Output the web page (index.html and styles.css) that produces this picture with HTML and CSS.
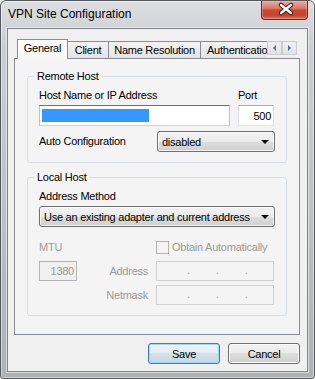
FILE: index.html
```html
<!DOCTYPE html>
<html lang="en">
<head>
    <meta charset="UTF-8">
    <title>VPN Site Configuration</title>
    <link rel="stylesheet" href="styles.css">
</head>
<body>
    <div class="window">
        <div class="titlebar">
            <span class="title">VPN Site Configuration</span>
            <button class="close" aria-label="Close">
                <svg width="47" height="19" viewBox="0 0 47 19">
                    <path d="M20 5 L30 13 M30 5 L20 13" stroke="#4a1c14" stroke-width="4.5" stroke-linecap="round"/>
                    <path d="M20 5 L30 13 M30 5 L20 13" stroke="#ffffff" stroke-width="2.4" stroke-linecap="round"/>
                </svg>
            </button>
        </div>
        <div class="client">
            <div class="tabstrip">
                <div class="tabs">
                    <div class="tab active">General</div>
                    <div class="tab t-client">Client</div>
                    <div class="tab t-names">Name Resolution</div>
                    <div class="tab t-auth">Authentication</div>
                </div>
                <div class="tab-scroll">
                    <span class="scroll-btn">
                        <svg width="13" height="12" viewBox="0 0 13 12"><path d="M8 3 L5 6 L8 9 Z" fill="#4f6b98"/></svg>
                    </span>
                    <span class="scroll-btn">
                        <svg width="13" height="12" viewBox="0 0 13 12"><path d="M5 3 L8 6 L5 9 Z" fill="#4f6b98"/></svg>
                    </span>
                </div>
            </div>

            <div class="panel">
                <fieldset class="group">
                    <legend>Remote Host</legend>
                    <div class="remote-grid">
                        <span class="label">Host Name or IP Address</span>
                        <span class="label">Port</span>
                        <div class="textbox focused"><span class="selection"></span></div>
                        <div class="textbox number">500</div>
                    </div>
                    <div class="auto-row">
                        <span class="label">Auto Configuration</span>
                        <div class="combo short">
                            <span>disabled</span>
                            <span class="arrow"></span>
                        </div>
                    </div>
                </fieldset>

                <fieldset class="group local">
                    <legend>Local Host</legend>
                    <span class="label">Address Method</span>
                    <div class="combo wide">
                        <span>Use an existing adapter and current address</span>
                        <span class="arrow"></span>
                    </div>
                    <div class="local-grid">
                        <span class="label disabled">MTU</span>
                        <span></span>
                        <label class="check disabled"><span class="box"></span>Obtain Automatically</label>

                        <div class="textbox number disabled">1380</div>
                        <span class="label disabled right">Address</span>
                        <div class="textbox ip disabled"><span>.</span><span>.</span><span>.</span></div>

                        <span></span>
                        <span class="label disabled right">Netmask</span>
                        <div class="textbox ip disabled"><span>.</span><span>.</span><span>.</span></div>
                    </div>
                </fieldset>
            </div>

            <div class="footer">
                <button class="btn default">Save</button>
                <button class="btn">Cancel</button>
            </div>
        </div>
    </div>
</body>
</html>
```

FILE: styles.css
```css
body {
    margin: 0;
    background: #ffffff;
    font-family: "Liberation Sans", Arial, sans-serif;
    font-size: 11px;
    letter-spacing: -0.25px;
    color: #000000;
}
.window {
    width: 315px;
    height: 379px;
    box-sizing: border-box;
    display: flex;
    flex-direction: column;
    border: 1px solid #55595e;
    border-radius: 6px 6px 3px 3px;
    background: linear-gradient(to bottom, #dcdee1 0%, #cbced2 12%, #bcc0c4 60%, #aeb2b7 100%);
    box-shadow: inset 0 0 0 1px rgba(255,255,255,0.45);
}
.titlebar {
    height: 27px;
    flex: none;
    display: flex;
    align-items: flex-start;
    padding-left: 7px;
}
.title {
    font-size: 12px;
    line-height: 16px;
    letter-spacing: 0;
    padding-top: 5px;
}
.close {
    margin-left: auto;
    margin-right: 6px;
    width: 47px;
    height: 19px;
    padding: 0;
    border: 1px solid #6b2a20;
    border-top: none;
    border-radius: 0 0 4px 4px;
    background: linear-gradient(to bottom, #e9a99c 0%, #db7c68 40%, #c64a31 50%, #c8452b 80%, #e0745c 100%);
    box-shadow: inset 0 0 0 1px rgba(255,200,190,0.35);
}
.close svg {
    display: block;
    margin: -1px 0 0 -1px;
}
.client {
    flex: 1;
    margin: 0 6px 6px 6px;
    padding: 10px 7px 0 6px;
    border: 1px solid #7f848a;
    background: #f0f0f0;
    display: flex;
    flex-direction: column;
    box-shadow: 0 0 0 1px rgba(255,255,255,0.5);
}

/* tabs */
.tabstrip {
    display: flex;
    height: 20px;
    position: relative;
    z-index: 1;
}
.tabs {
    width: 253px;
    height: 20px;
    padding-left: 3px;
    box-sizing: border-box;
    display: flex;
    align-items: flex-start;
    overflow: hidden;
}
.tab {
    flex: none;
    box-sizing: border-box;
    height: 17px;
    margin-top: 2px;
    margin-left: -1px;
    border: 1px solid #898c95;
    border-bottom: none;
    background: linear-gradient(to bottom, #f3f3f3, #e4e4e4);
    line-height: 16px;
    text-align: center;
    white-space: nowrap;
}
.tab.active {
    width: 51px;
    height: 20px;
    margin-top: 0;
    margin-left: 0;
    background: linear-gradient(to bottom, #ffffff, #f6f6f6);
    position: relative;
    z-index: 2;
}
.t-client { width: 42px; }
.t-names { width: 93px; }
.t-auth {
    width: 80px;
    text-align: left;
    padding-left: 6px;
}
.tab-scroll {
    display: flex;
    margin-top: 2px;
}
.scroll-btn {
    width: 15px;
    height: 14px;
    box-sizing: border-box;
    border: 1px solid #c9cbcf;
    background: linear-gradient(to bottom, #f0f0f0, #e2e2e2);
}
.scroll-btn svg { display: block; }

.panel {
    height: 277px;
    margin-top: -1px;
    box-sizing: border-box;
    border: 1px solid #898c95;
    background: #f4f4f4;
    padding: 11px 12px 0 12px;
}

/* group boxes */
.group {
    margin: 0;
    min-width: 0;
    padding: 6px 11px 10px 11px;
    border: 1px solid #d5dfe5;
    border-radius: 3px;
}
.group legend {
    padding: 0 3px;
    margin-left: -5px;
    line-height: 13px;
}
.group.local {
    margin-top: 8px;
}
.label {
    display: block;
    line-height: 13px;
    white-space: nowrap;
}
.label.right { text-align: right; }
.disabled { color: #9a9a9a; }

.remote-grid {
    display: grid;
    grid-template-columns: 191px 36px;
    column-gap: 8px;
    row-gap: 3px;
}
.textbox {
    height: 21px;
    box-sizing: border-box;
    border: 1px solid #dbdfe6;
    border-top-color: #abadb3;
    border-bottom-color: #e3e9ef;
    background: #ffffff;
    padding: 0 3px;
    display: flex;
    align-items: center;
}
.textbox.focused {
    border-color: #a6c8e2;
    border-top-color: #3d7bad;
    border-bottom-color: #b7d9ed;
    padding-left: 2px;
}
.selection {
    width: 107px;
    height: 13px;
    background: #3399ff;
}
.textbox.number {
    justify-content: flex-end;
    padding-right: 2px;
}
.textbox.disabled {
    height: 20px;
    background: #f4f4f4;
    border-color: #d0d0d0;
}
.textbox.number.disabled {
    border-color: #b5b5b5;
    background: #f0f0f0;
}
.textbox.ip {
    padding-left: 30px;
    gap: 26px;
    padding-bottom: 3px;
}

.auto-row {
    display: flex;
    align-items: center;
    justify-content: space-between;
    margin-top: 5px;
}
.combo {
    height: 21px;
    box-sizing: border-box;
    border: 1px solid #707070;
    border-radius: 3px;
    background: linear-gradient(to bottom, #f2f2f2 0%, #ebebeb 50%, #dddddd 50%, #cfcfcf 100%);
    box-shadow: inset 0 0 0 1px rgba(255,255,255,0.7);
    display: flex;
    align-items: center;
    justify-content: space-between;
    padding: 0 5px 0 4px;
    white-space: nowrap;
}
.combo.short { width: 118px; }
.combo.wide {
    margin-top: 3px;
    height: 21px;
}
.arrow {
    width: 0;
    height: 0;
    border-left: 4px solid transparent;
    border-right: 4px solid transparent;
    border-top: 4px solid #000000;
}

.local-grid {
    display: grid;
    grid-template-columns: 38px 63px 118px;
    grid-template-rows: 16px 20px 20px;
    column-gap: 8px;
    row-gap: 4px;
    margin-top: 14px;
    align-items: center;
}
.local-grid > .label { align-self: center; }
.local-grid > .label:first-child { align-self: start; }
.check {
    align-self: start;
    display: flex;
    align-items: center;
    gap: 3px;
    line-height: 13px;
    white-space: nowrap;
}
.check .box {
    width: 13px;
    height: 13px;
    box-sizing: border-box;
    border: 1px solid #b1b1b1;
    background: #f4f4f4;
}

/* buttons */
.footer {
    display: flex;
    justify-content: flex-end;
    gap: 8px;
    margin-top: 8px;
}
.btn {
    width: 72px;
    height: 21px;
    padding: 0;
    font-family: "Liberation Sans", Arial, sans-serif;
    font-size: 11px;
    letter-spacing: -0.25px;
    color: #000000;
    border: 1px solid #707070;
    border-radius: 3px;
    background: linear-gradient(to bottom, #f2f2f2 0%, #ebebeb 50%, #dddddd 50%, #cfcfcf 100%);
    box-shadow: inset 0 0 0 1px #fbfbfb;
}
.btn.default {
    border-color: #3c7fb1;
    background: linear-gradient(to bottom, #eef4f8 0%, #e3ecf2 50%, #d3e1eb 50%, #c7d8e4 100%);
    box-shadow: inset 0 0 0 1px #9fd5f5;
}
```
